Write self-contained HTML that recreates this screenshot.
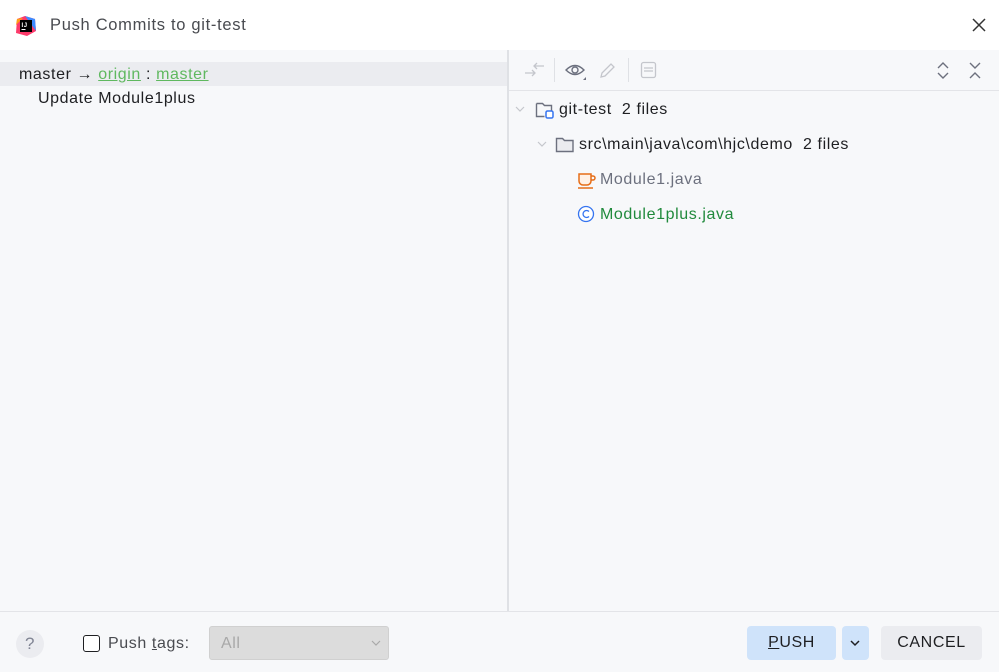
<!DOCTYPE html>
<html><head><style>
*{margin:0;padding:0;box-sizing:border-box}
body{width:999px;height:672px;background:#f7f8fa;font-family:"Liberation Sans",sans-serif;font-size:16px;letter-spacing:0.6px;color:#1e1f22;position:relative;overflow:hidden}
.abs{position:absolute}
.title{left:0;top:0;width:999px;height:50px;background:#fff}
.u{text-decoration:underline;color:#5fb85f}
</style></head><body>
<div class="abs title"></div>
<svg class="abs" style="left:15px;top:15px" width="22" height="22" viewBox="0 0 22 22"><path d="M2 4 L10 1 L20 4 L21 16 L12 21 L1 18Z" fill="#fc3a6a"/><path d="M10 1 L20 4 L21 16 Z" fill="#3d8bff"/><path d="M1 10 L2 4 L8 3Z" fill="#ff9d16"/><rect x="5" y="5" width="12" height="12" fill="#000"/><text x="6.5" y="12" font-size="6" fill="#fff" font-family="Liberation Sans" font-weight="bold">IJ</text><rect x="6.5" y="14" width="4" height="1" fill="#fff"/></svg>
<div class="abs" style="left:50px;top:16px;font-size:16.5px;letter-spacing:0.7px;color:#494b50">Push Commits to git-test</div>
<svg class="abs" style="left:972px;top:18px" width="14" height="14"><path d="M1 1L13 13M13 1L1 13" stroke="#333" stroke-width="1.5"/></svg>

<div class="abs" style="left:0;top:62px;width:508px;height:24px;background:#ebecf0"></div>
<div class="abs" style="left:19px;top:66px">master → <span class="u">origin</span> : <span class="u">master</span></div>
<div class="abs" style="left:38px;top:90px">Update Module1plus</div>

<div class="abs" style="left:507px;top:50px;width:2px;height:561px;background:#dfe1e5"></div>
<div class="abs" style="left:509px;top:90px;width:490px;height:1px;background:#e3e4e8"></div>
<svg class="abs" style="left:522px;top:58px" width="24" height="24"><path d="M3 15H13M10 12l3 3-3 3M22 8H12M15 5l-3 3 3 3" stroke="#c4c6cc" stroke-width="1.3" fill="none"/></svg>
<div class="abs" style="left:554px;top:58px;width:1px;height:24px;background:#dfe1e5"></div>
<svg class="abs" style="left:564px;top:61px" width="24" height="20"><path d="M2 9 Q11 0 20 9 Q11 18 2 9Z" stroke="#6c707e" stroke-width="1.4" fill="none"/><circle cx="11" cy="9" r="3" stroke="#6c707e" stroke-width="1.4" fill="none"/><path d="M19 19h3v-3z" fill="#6c707e"/></svg>
<svg class="abs" style="left:598px;top:60px" width="20" height="20"><path d="M3 17l1-4 9-9 3 3-9 9z" stroke="#c4c6cc" stroke-width="1.3" fill="none"/></svg>
<div class="abs" style="left:628px;top:58px;width:1px;height:24px;background:#dfe1e5"></div>
<svg class="abs" style="left:639px;top:60px" width="20" height="20"><rect x="2.5" y="2.5" width="14" height="15" rx="2" stroke="#c4c6cc" stroke-width="1.3" fill="none"/><path d="M5 8h9M5 11h9" stroke="#c4c6cc" stroke-width="1.3"/></svg>
<svg class="abs" style="left:934px;top:60px" width="18" height="22"><path d="M4 8l5-5 5 5M4 13l5 5 5-5" stroke="#6c707e" stroke-width="1.4" fill="none"/></svg>
<svg class="abs" style="left:966px;top:60px" width="18" height="22"><path d="M4 3l5 5 5-5M4 18l5-5 5 5" stroke="#6c707e" stroke-width="1.4" fill="none"/></svg>

<svg class="abs" style="left:514px;top:104px" width="12" height="10"><path d="M2 3l4 4 4-4" stroke="#c4c6cc" stroke-width="1.2" fill="none"/></svg>
<svg class="abs" style="left:535px;top:100px" width="22" height="20"><path d="M1.5 3.5h6l2 2h7v5M1.5 3.5v13h8" stroke="#6c707e" stroke-width="1.4" fill="none"/><rect x="11" y="11" width="7" height="7" rx="1.5" stroke="#3574f0" stroke-width="1.5" fill="#fff"/></svg>
<div class="abs" style="left:559px;top:101px">git-test&nbsp; 2 files</div>
<svg class="abs" style="left:536px;top:139px" width="12" height="10"><path d="M2 3l4 4 4-4" stroke="#c4c6cc" stroke-width="1.2" fill="none"/></svg>
<svg class="abs" style="left:555px;top:135px" width="20" height="20"><path d="M1.5 3.5h6l2 2h8.5v11h-16.5z" stroke="#6c707e" stroke-width="1.4" fill="#ebecf0"/></svg>
<div class="abs" style="left:579px;top:136px">src\main\java\com\hjc\demo&nbsp; 2 files</div>
<svg class="abs" style="left:577px;top:170px" width="20" height="20"><path d="M2 4h12v7a4 4 0 0 1-4 4H6a4 4 0 0 1-4-4z" stroke="#e66d17" stroke-width="1.5" fill="#fff1e6"/><path d="M14 6h2a2 2 0 0 1 0 4h-2" stroke="#e66d17" stroke-width="1.5" fill="none"/><path d="M1 18h15" stroke="#e66d17" stroke-width="1.5"/></svg>
<div class="abs" style="left:600px;top:171px;color:#6c707e">Module1.java</div>
<svg class="abs" style="left:577px;top:205px" width="18" height="18"><circle cx="9" cy="9" r="7.5" stroke="#3574f0" stroke-width="1.3" fill="#fff"/><path d="M12 6.5a3.5 3.5 0 1 0 0 5" stroke="#3574f0" stroke-width="1.3" fill="none"/></svg>
<div class="abs" style="left:600px;top:206px;color:#208a3c">Module1plus.java</div>

<div class="abs" style="left:0;top:611px;width:999px;height:1px;background:#e3e4e8"></div>
<div class="abs" style="left:16px;top:630px;width:28px;height:28px;border-radius:14px;background:#ebecf0;color:#818594;text-align:center;line-height:28px;font-size:17px">?</div>
<div class="abs" style="left:83px;top:635px;width:17px;height:17px;border:1.5px solid #1e1f22;border-radius:3px;background:#fff"></div>
<div class="abs" style="left:108px;top:635px;color:#494b50">Push <u>t</u>ags:</div>
<div class="abs" style="left:209px;top:626px;width:180px;height:34px;background:#dcdcdc;border:1px solid #d0d0d0;border-radius:3px;color:#a8a8a8;padding:8px 0 0 11px">All</div>
<svg class="abs" style="left:370px;top:638px" width="12" height="10"><path d="M2 3l4 4 4-4" stroke="#a8a8a8" stroke-width="1.2" fill="none"/></svg>
<div class="abs" style="left:747px;top:626px;width:89px;height:34px;background:#cfe3fa;border-radius:4px;text-align:center;line-height:34px;color:#1e1f22"><u>P</u>USH</div>
<div class="abs" style="left:842px;top:626px;width:27px;height:34px;background:#cfe3fa;border-radius:4px"></div>
<svg class="abs" style="left:849px;top:638px" width="12" height="10"><path d="M2 3l4 4 4-4" stroke="#1e1f22" stroke-width="1.5" fill="none"/></svg>
<div class="abs" style="left:881px;top:626px;width:101px;height:34px;background:#ebecf0;border-radius:4px;text-align:center;line-height:34px">CANCEL</div>
</body></html>
